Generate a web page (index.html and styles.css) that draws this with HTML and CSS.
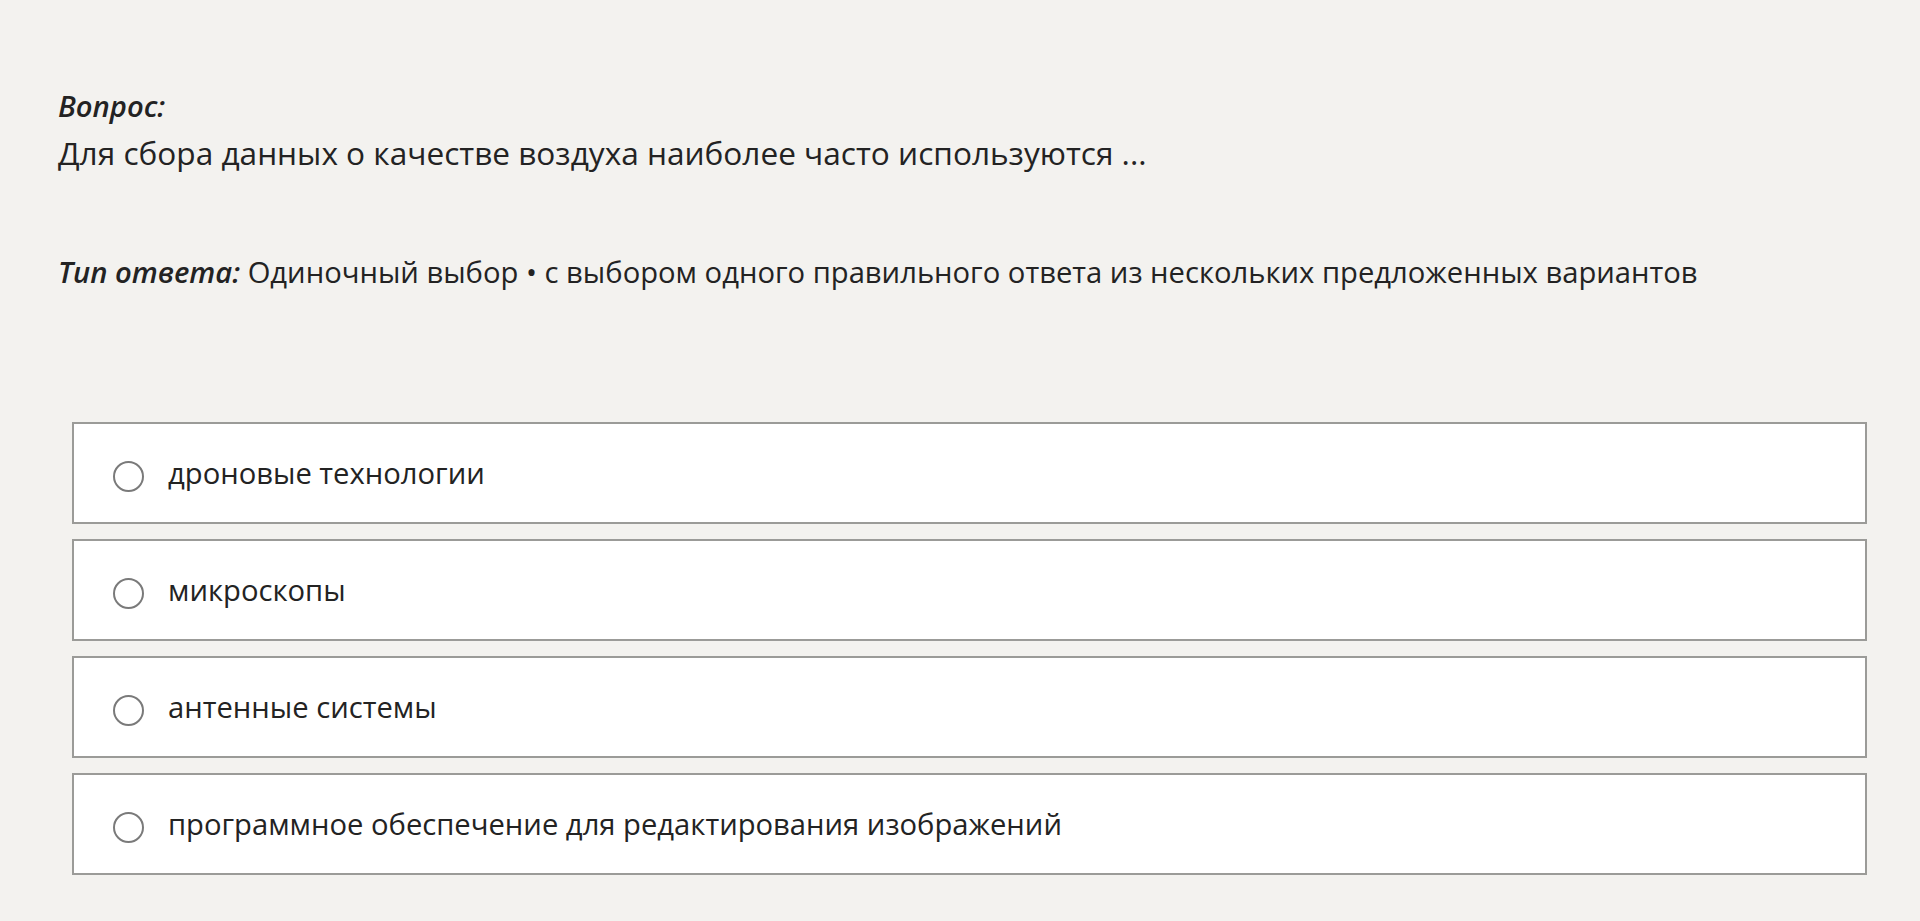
FILE: index.html
```html
<!DOCTYPE html>
<html lang="ru">
<head>
  <meta charset="UTF-8">
  <title>Вопрос</title>
  <link rel="stylesheet" href="styles.css">
</head>
<body>

<div class="quiz">
  <!-- вопрос -->
  <div class="question">
    <div class="label">Вопрос:</div>
    <div class="text">Для сбора данных о качестве воздуха наиболее часто используются ...</div>
  </div>

  <!-- тип ответа -->
  <div class="type">
    <span class="label">Тип ответа:</span> Одиночный выбор • с выбором одного правильного ответа из нескольких предложенных вариантов
  </div>

  <!-- варианты -->
  <div class="options">
    <label class="option"><input type="radio" name="answer"><span>дроновые технологии</span></label>
    <label class="option"><input type="radio" name="answer"><span>микроскопы</span></label>
    <label class="option"><input type="radio" name="answer"><span>антенные системы</span></label>
    <label class="option"><input type="radio" name="answer"><span>программное обеспечение для редактирования изображений</span></label>
  </div>
</div>

</body>
</html>
```

FILE: styles.css
```css
body {
  margin: 0;
  background: #f3f2ef;
  color: #232323;
  font-family: 'Open Sans', 'Noto Sans', sans-serif;
  font-size: 29.2px;
}

.quiz {
  padding: 81px 53px 0 58px;
}

.question .label {
  line-height: 50px;
}

.question .text {
  font-size: 31.6px;
  line-height: 44px;
}

.label {
  font-weight: 600;
  font-style: italic;
}

.type {
  margin-top: 77px;
  line-height: 40px;
}

.options {
  margin-top: 130px;
  margin-left: 14px;
  display: flex;
  flex-direction: column;
  gap: 15px;
}

.option {
  display: flex;
  align-items: center;
  height: 102px;
  box-sizing: border-box;
  padding-left: 39px;
  background: #fff;
  border: 2px solid #9b9b98;
  line-height: 40px;
}

.option input {
  appearance: none;
  margin: 7px 24px 0 0;
  width: 31px;
  height: 31px;
  box-sizing: border-box;
  border: 2px solid #7a7a7a;
  border-radius: 50%;
  background: #fff;
}
```
